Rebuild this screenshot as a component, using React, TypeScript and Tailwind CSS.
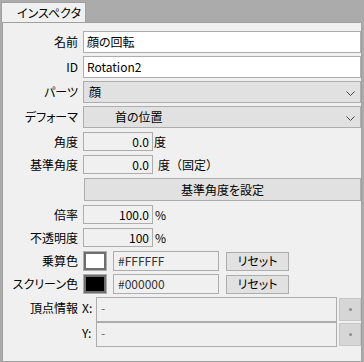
const font = "font-['Noto_Sans_CJK_JP',sans-serif] [font-feature-settings:'palt']";

const Label = ({ children }: { children?: React.ReactNode }) => (
  <div className="w-[75px] shrink-0 text-right leading-none">{children}</div>
);

const Chevron = () => (
  <svg width="9" height="5" viewBox="0 0 9 5" className="absolute right-[5px] top-[9px]">
    <polyline points="0.5,0.5 4.5,4.5 8.5,0.5" fill="none" stroke="#444" strokeWidth="1" />
  </svg>
);

const NumBox = ({ value }: { value: string }) => (
  <div className="ml-[5px] w-[70px] h-full border border-[#adadad] bg-[#f0f0f0] flex items-center justify-end pr-[3px]">
    {value}
  </div>
);

const Swatch = ({ color }: { color: string }) => (
  <div className="ml-[5px] w-[24px] h-full border border-[#adadad] p-0">
    <div className="w-full h-full border-2 border-[#6e6e6e]" style={{ background: color }} />
  </div>
);

const ResetButton = () => (
  <div className="ml-[7px] w-[63px] h-[19px] border border-[#adadad] bg-[#e1e1e1] flex items-center justify-center">
    リセット
  </div>
);

const SmallButton = () => (
  <div className="ml-[2px] w-[22px] h-[23px] border border-[#c6c6c6] bg-[#d6d6d6] flex items-center justify-center">
    <div className="w-[3px] h-[3px] rounded-full bg-[#8a8a8a]" />
  </div>
);

export default function App() {
  return (
    <div className={`w-[364px] h-[362px] bg-[#ababab] overflow-hidden text-[12px] text-black ${font}`}>
      {/* TAB */}
      <div className="h-[22px] pt-[2px] pl-[1px] flex">
        <div className="w-[85px] h-[20px] bg-[#f0f0f0] border border-b-0 border-[#a0a0a0] pl-[15px] flex items-center">
          インスペクタ
        </div>
      </div>

      {/* PANEL */}
      <div className="ml-[2px] w-[360px] h-[340px] bg-[#f0f0f0] border border-[#a0a0a0]">
        <div className="mt-[8px] h-[22px] flex items-center">
          <Label>名前</Label>
          <div className="ml-[5px] flex-1 h-full border border-[#adadad] bg-white flex items-center pl-[3px]">顔の回転</div>
        </div>
        <div className="mt-[3px] h-[22px] flex items-center">
          <Label>ID</Label>
          <div className="ml-[5px] flex-1 h-full border border-[#adadad] bg-white flex items-center pl-[3px]">Rotation2</div>
        </div>
        <div className="mt-[3px] h-[22px] flex items-center">
          <Label>パーツ</Label>
          <div className="relative ml-[5px] flex-1 h-full border border-[#adadad] bg-[#e1e1e1] flex items-center pl-[5px]">
            顔
            <Chevron />
          </div>
        </div>
        <div className="mt-[3px] h-[22px] flex items-center">
          <Label>デフォーマ</Label>
          <div className="relative ml-[5px] flex-1 h-full border border-[#adadad] bg-[#e1e1e1] flex items-center pl-[31px]">
            首の位置
            <Chevron />
          </div>
        </div>
        <div className="mt-[4px] h-[19px] flex items-center">
          <Label>角度</Label>
          <NumBox value="0.0" />
          <span className="ml-[1px]">度</span>
        </div>
        <div className="mt-[4px] h-[19px] flex items-center">
          <Label>基準角度</Label>
          <NumBox value="0.0" />
          <span className="ml-[5px] [font-feature-settings:normal]">度（固定）</span>
        </div>
        <div className="mt-[4px] h-[23px] flex items-center">
          <Label />
          <div className="ml-[6px] flex-1 h-full border border-[#adadad] bg-[#e1e1e1] flex items-center justify-center">
            基準角度を設定
          </div>
        </div>
        <div className="mt-[4px] h-[19px] flex items-center">
          <Label>倍率</Label>
          <NumBox value="100.0" />
          <span className="ml-[2px]">%</span>
        </div>
        <div className="mt-[4px] h-[19px] flex items-center">
          <Label>不透明度</Label>
          <NumBox value="100" />
          <span className="ml-[2px]">%</span>
        </div>
        <div className="mt-[4px] h-[20px] flex items-center">
          <Label>乗算色</Label>
          <Swatch color="#ffffff" />
          <div className="ml-[6px] w-[106px] h-full border border-[#adadad] bg-[#f0f0f0] flex items-center pl-[4px] text-[#333]">
            #FFFFFF
          </div>
          <ResetButton />
        </div>
        <div className="mt-[3px] h-[20px] flex items-center">
          <Label>スクリーン色</Label>
          <Swatch color="#000000" />
          <div className="ml-[6px] w-[106px] h-full border border-[#adadad] bg-[#f0f0f0] flex items-center pl-[4px] text-[#333]">
            #000000
          </div>
          <ResetButton />
        </div>
        <div className="mt-[3px] h-[25px] flex items-start">
          <div className="pt-[5px] flex">
            <Label>頂点情報</Label>
            <span className="ml-[4px] w-[14px] leading-none">X:</span>
          </div>
          <div className="w-[241px] h-full border border-[#adadad] bg-[#f0f0f0] pl-[4px] pt-[4px] text-[#666] leading-none">-</div>
          <div className="pt-[1px]">
            <SmallButton />
          </div>
        </div>
        <div className="h-[25px] flex items-start">
          <div className="pt-[5px] flex">
            <Label />
            <span className="ml-[4px] w-[14px] leading-none">Y:</span>
          </div>
          <div className="w-[241px] h-full border border-[#adadad] bg-[#f0f0f0] pl-[4px] pt-[4px] text-[#666] leading-none">-</div>
          <div className="pt-[1px]">
            <SmallButton />
          </div>
        </div>
      </div>
    </div>
  );
}
